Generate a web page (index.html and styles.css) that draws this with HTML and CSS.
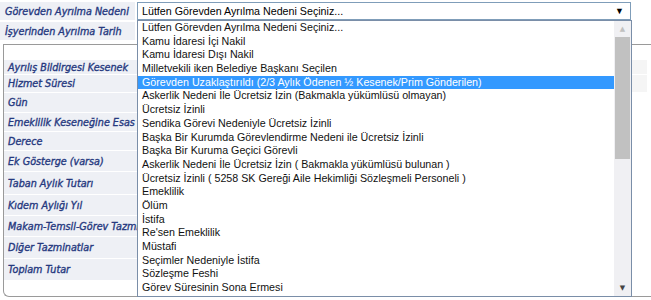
FILE: index.html
```html
<!DOCTYPE html>
<html lang="tr">
<head>
    <meta charset="UTF-8">
    <title>Görevden Ayrılma</title>
    <link rel="stylesheet" href="styles.css">
</head>
<body>
    <div class="form">
        <div class="row top">
            <div class="label">Görevden Ayrılma Nedeni</div>
            <div class="value">
                <div class="select">
                    <span>Lütfen Görevden Ayrılma Nedeni Seçiniz...</span>
                    <span class="arrow">▼</span>
                </div>
            </div>
        </div>
        <div class="row top">
            <div class="label">İşyerinden Ayrılma Tarih</div>
            <div class="value"></div>
        </div>

        <div class="panel">
            <div class="row h14"><div class="label">Ayrılış Bildirgesi Kesenek</div><div class="value box"></div></div>
            <div class="row h17"><div class="label">Hizmet Süresi</div><div class="value box"></div></div>
            <div class="row h19"><div class="label">Gün</div><div class="value"></div></div>
            <div class="row h18"><div class="label">Emeklilik Keseneğine Esas</div><div class="value"></div></div>
            <div class="row h18"><div class="label">Derece</div><div class="value"></div></div>
            <div class="row h20"><div class="label">Ek Gösterge (varsa)</div><div class="value"></div></div>
            <div class="row h22"><div class="label">Taban Aylık Tutarı</div><div class="value"></div></div>
            <div class="row h20"><div class="label">Kıdem Aylığı Yıl</div><div class="value"></div></div>
            <div class="row h20"><div class="label">Makam-Temsil-Görev Tazminatı</div><div class="value"></div></div>
            <div class="row h21"><div class="label">Diğer Tazminatlar</div><div class="value"></div></div>
            <div class="row h21"><div class="label">Toplam Tutar</div><div class="value"></div></div>
        </div>
    </div>

    <div class="dropdown">
        <ul class="options">
            <li>Lütfen Görevden Ayrılma Nedeni Seçiniz...</li>
            <li>Kamu İdaresi İçi Nakil</li>
            <li>Kamu İdaresi Dışı Nakil</li>
            <li>Milletvekili iken Belediye Başkanı Seçilen</li>
            <li class="selected">Görevden Uzaklaştırıldı (2/3 Aylık Ödenen ½ Kesenek/Prim Gönderilen)</li>
            <li>Askerlik Nedeni İle Ücretsiz İzin (Bakmakla yükümlüsü olmayan)</li>
            <li>Ücretsiz İzinli</li>
            <li>Sendika Görevi Nedeniyle Ücretsiz İzinli</li>
            <li>Başka Bir Kurumda Görevlendirme Nedeni ile Ücretsiz İzinli</li>
            <li>Başka Bir Kuruma Geçici Görevli</li>
            <li>Askerlik Nedeni İle Ücretsiz İzin ( Bakmakla yükümlüsü bulunan )</li>
            <li>Ücretsiz İzinli ( 5258 SK Gereği Aile Hekimliği Sözleşmeli Personeli )</li>
            <li>Emeklilik</li>
            <li>Ölüm</li>
            <li>İstifa</li>
            <li>Re'sen Emeklilik</li>
            <li>Müstafi</li>
            <li>Seçimler Nedeniyle İstifa</li>
            <li>Sözleşme Feshi</li>
            <li>Görev Süresinin Sona Ermesi</li>
        </ul>
        <div class="scrollbar">
            <span class="up">▲</span>
            <div class="thumb"></div>
            <span class="down">▼</span>
        </div>
    </div>
</body>
</html>
```

FILE: styles.css
```css
body {
    margin: 0;
    background: #ffffff;
    font-family: "DejaVu Sans", Verdana, sans-serif;
    overflow: hidden;
}
.form {
    padding-top: 2px;
}
.row {
    display: flex;
    margin-bottom: 2px;
}
.label {
    width: 135px;
    flex-shrink: 0;
    white-space: nowrap;
    overflow: hidden;
    background: #eef0f5;
    color: #26397f;
    font-family: "DejaVu Sans Condensed", "DejaVu Sans", sans-serif;
    font-size: 10.7px;
    font-style: italic;
    -webkit-text-stroke: 0.35px #26397f;
    padding-left: 5px;
    box-sizing: border-box;
    display: flex;
    align-items: center;
}
.value {
    flex: 1;
    padding-left: 2px;
}
.top {
    height: 18px;
}
.top .value {
    display: flex;
    align-items: center;
}
.select {
    width: 494px;
    height: 18px;
    box-sizing: border-box;
    border: 1px solid #7f9db9;
    background: #fff;
    display: flex;
    justify-content: space-between;
    align-items: center;
    padding: 0 6px 0 4px;
    font-family: "Liberation Sans", Arial, sans-serif;
    font-size: 10.7px;
    color: #000;
}
.select .arrow {
    font-size: 9px;
}
.panel {
    margin: 4px 0 0 3px;
    border: 1px solid #9a9a9a;
    border-right: none;
    border-radius: 0 0 0 6px;
    padding: 15px 0 15px 0;
}
.panel .row {
    margin-bottom: 1px;
}
.panel .label {
    width: 133px;
    padding-left: 4px;
}
.panel .value.box {
    background: #f5f5f5;
    margin-left: 490px;
    margin-right: 4px;
}
.h14 { height: 14px; }
.h17 { height: 17px; }
.h18 { height: 18px; }
.h19 { height: 19px; }
.h20 { height: 20px; }
.h21 { height: 21px; }
.h22 { height: 22px; }

.dropdown {
    position: absolute;
    left: 137px;
    top: 20px;
    width: 495px;
    height: 277px;
    box-sizing: border-box;
    border: 1px solid #7a8ea8;
    background: #fff;
    display: flex;
}
.options {
    list-style: none;
    margin: 0;
    padding: 0;
    flex: 1;
    font-family: "Liberation Sans", Arial, sans-serif;
    font-size: 10.7px;
    color: #111;
    overflow: hidden;
}
.options li {
    height: 13.7px;
    line-height: 13.7px;
    padding-left: 4px;
    white-space: nowrap;
}
.options li.selected {
    background: #3399ff;
    color: #fff;
}
.scrollbar {
    width: 17px;
    background: #f0f0f3;
    display: flex;
    flex-direction: column;
    align-items: center;
    color: #c0c0c0;
    font-size: 7px;
}
.scrollbar .up {
    height: 16px;
    line-height: 16px;
}
.scrollbar .thumb {
    width: 15px;
    height: 122px;
    background: #c1c1c1;
}
.scrollbar .down {
    margin-top: auto;
    height: 16px;
    line-height: 16px;
    color: #444;
}
```
